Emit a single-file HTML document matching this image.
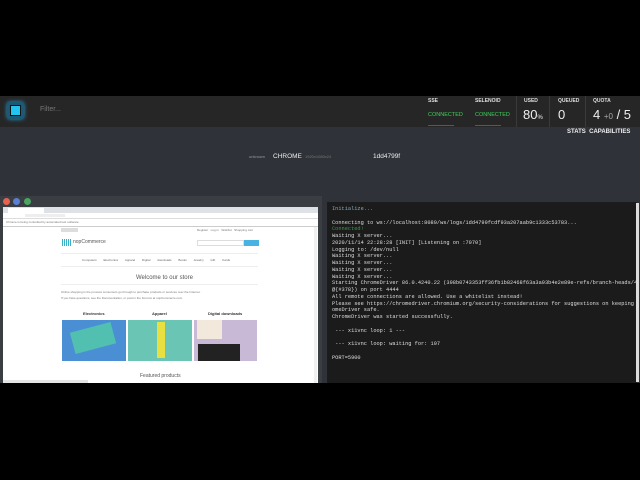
<!DOCTYPE html>
<html><head><meta charset="utf-8"><style>
*{margin:0;padding:0;box-sizing:border-box}
body{width:640px;height:480px;background:#000;font-family:"Liberation Sans",sans-serif;position:relative;overflow:hidden}
.abs{position:absolute}
.top{left:0;top:96px;width:640px;height:31px;background:#262626}
.mid{left:0;top:127px;width:640px;height:69px;background:#2f3238}
.lbl{font-size:5px;color:#ddd;font-weight:bold}
.grn{font-size:5.5px;color:#3fcf5a}
.big{font-size:13px;color:#eee}
.term{left:322px;top:196px;width:318px;height:187px;background:#2f3238}
.tin{left:327px;top:202px;width:310px;height:181px;background:#1b1b1b;font-family:"Liberation Mono",monospace;font-size:5.3px;line-height:6.75px;color:#ddd;padding:4px 0 0 5px;white-space:pre;overflow:hidden}
.win{left:0;top:196px;width:322px;height:187px;background:#3a3d42}
.dot{width:7px;height:7px;border-radius:50%;top:198px}
.br{left:3px;top:207px;width:315px;height:176px;background:#fff}
.t{font-size:3px;color:#777}
</style></head><body>
<div class="abs top"></div>
<div class="abs" style="left:7px;top:102px;width:17px;height:17px;border-radius:3px;background:#1a5a77;box-shadow:0 0 4px #29a0d0"></div>
<div class="abs" style="left:10px;top:105px;width:11px;height:11px;background:#22c5f0;border:1px solid #111"></div>
<div class="abs" style="left:40px;top:106px;font-size:7px;color:#777">Filter...</div>
<div class="abs lbl" style="left:428px;top:98px">SSE</div>
<div class="abs lbl" style="left:475px;top:98px">SELENOID</div>
<div class="abs lbl" style="left:524px;top:98px">USED</div>
<div class="abs lbl" style="left:558px;top:98px">QUEUED</div>
<div class="abs lbl" style="left:593px;top:98px">QUOTA</div>
<div class="abs grn" style="left:428px;top:112px">CONNECTED</div>
<div class="abs grn" style="left:475px;top:112px">CONNECTED</div>
<div class="abs" style="left:428px;top:125px;width:26px;height:1px;background:#3a6a48"></div>
<div class="abs" style="left:475px;top:125px;width:26px;height:1px;background:#3a6a48"></div>
<div class="abs" style="left:516px;top:96px;width:1px;height:31px;background:#3a3a3a"></div>
<div class="abs" style="left:549px;top:96px;width:1px;height:31px;background:#3a3a3a"></div>
<div class="abs" style="left:585px;top:96px;width:1px;height:31px;background:#3a3a3a"></div>
<div class="abs big" style="left:523px;top:107px">80<span style="font-size:6px">%</span></div>
<div class="abs big" style="left:558px;top:107px">0</div>
<div class="abs big" style="left:593px;top:107px">4 <span style="font-size:8px;color:#aaa">+0</span> / 5</div>
<div class="abs mid"></div>
<div class="abs" style="left:567px;top:129px;font-size:6px;color:#eee;font-weight:bold">STATS&nbsp; CAPABILITIES</div>
<div class="abs" style="left:249px;top:154px;font-size:4px;color:#999">unknown</div>
<div class="abs" style="left:273px;top:153px;font-size:6.5px;color:#eee">CHROME</div>
<div class="abs" style="left:305px;top:154px;font-size:4px;color:#777">1920x1080x24</div>
<div class="abs" style="left:373px;top:153px;font-size:6.5px;color:#eee">1dd4799f</div>
<div class="abs term"></div>
<div class="abs tin"><span style="color:#8ab">Initialize...</span>

Connecting to ws://localhost:8080/ws/logs/1dd4799fcdf93a207aab9c1333c53783...
<span style="color:#3a9a4a">Connected!</span>
Waiting X server...
2020/11/14 22:28:28 [INIT] [Listening on :7070]
Logging to: /dev/null
Waiting X server...
Waiting X server...
Waiting X server...
Waiting X server...
Starting ChromeDriver 86.0.4240.22 (398b0743353ff36fb1b82468f63a3a93b4e2e89e-refs/branch-heads/4240
@{#378}) on port 4444
All remote connections are allowed. Use a whitelist instead!
Please see https://chromedriver.chromium.org/security-considerations for suggestions on keeping Chr
omeDriver safe.
ChromeDriver was started successfully.

 --- x11vnc loop: 1 ---

 --- x11vnc loop: waiting for: 107

PORT=5900</div>
<div class="abs" style="left:636px;top:203px;width:3px;height:179px;background:#ddd"></div>
<div class="abs win"></div>
<div class="abs dot" style="left:3px;background:#e8614f"></div>
<div class="abs dot" style="left:13px;background:#5b7ed6"></div>
<div class="abs dot" style="left:24px;background:#4aa562"></div>
<div class="abs br"></div>
<div class="abs" style="left:3px;top:207px;width:315px;height:6px;background:#dee1e6"></div>
<div class="abs" style="left:8px;top:208px;width:36px;height:5px;background:#fff"></div>
<div class="abs" style="left:3px;top:218px;width:315px;height:1px;background:#ddd"></div>
<div class="abs" style="left:3px;top:226px;width:315px;height:1px;background:#ccc"></div>
<div class="abs" style="left:25px;top:214px;width:40px;height:3px;background:#eee"></div>
<div class="abs t" style="left:6px;top:220px">Chrome is being controlled by automated test software.</div>
<div class="abs" style="left:61px;top:228px;width:17px;height:4px;background:#ddd"></div>
<div class="abs t" style="left:197px;top:228px">Register &nbsp; Log in &nbsp; Wishlist &nbsp; Shopping cart</div>
<div class="abs" style="left:62px;top:239px;width:10px;height:7px;background:repeating-linear-gradient(90deg,#3ab0c8 0 1px,transparent 1px 2px)"></div>
<div class="abs" style="left:73px;top:239px;font-size:5px;color:#555">nopCommerce</div>
<div class="abs" style="left:197px;top:240px;width:47px;height:6px;border:1px solid #ddd"></div>
<div class="abs" style="left:244px;top:240px;width:15px;height:6px;background:#4ab2e3"></div>
<div class="abs" style="left:61px;top:253px;width:197px;height:1px;background:#eee"></div>
<div class="abs" style="left:82px;top:258px;font-size:3px;color:#666;word-spacing:6px">Computers Electronics Apparel Digital&nbsp;downloads Books Jewelry Gift&nbsp;Cards</div>
<div class="abs" style="left:61px;top:266px;width:197px;height:1px;background:#eee"></div>
<div class="abs" style="left:136px;top:275px;font-size:6px;color:#555">Welcome to our store</div>
<div class="abs" style="left:61px;top:284px;width:197px;height:1px;background:#eee"></div>
<div class="abs t" style="left:61px;top:290px">Online shopping is the process consumers go through to purchase products or services over the Internet.</div>
<div class="abs t" style="left:61px;top:296px">If you have questions, see the Documentation, or post in the Forums at nopCommerce.com</div>
<div class="abs" style="left:83px;top:311px;font-size:4px;font-weight:bold;color:#333">Electronics</div>
<div class="abs" style="left:152px;top:311px;font-size:4px;font-weight:bold;color:#333">Apparel</div>
<div class="abs" style="left:208px;top:311px;font-size:4px;font-weight:bold;color:#333">Digital downloads</div>
<div class="abs" style="left:62px;top:320px;width:64px;height:41px;background:#4a8fd4"></div>
<div class="abs" style="left:72px;top:327px;width:42px;height:22px;background:#52c0b0;transform:rotate(-15deg)"></div>
<div class="abs" style="left:128px;top:320px;width:64px;height:41px;background:#6ac5b5"></div>
<div class="abs" style="left:157px;top:322px;width:8px;height:36px;background:#e8e040"></div>
<div class="abs" style="left:194px;top:320px;width:63px;height:41px;background:#c8b9d6"></div>
<div class="abs" style="left:197px;top:320px;width:25px;height:19px;background:#f2e8dc"></div>
<div class="abs" style="left:198px;top:344px;width:42px;height:17px;background:#222"></div>
<div class="abs" style="left:140px;top:373px;font-size:5px;color:#555">Featured products</div>
<div class="abs" style="left:3px;top:380px;width:85px;height:3px;background:#e4e4e4"></div>
<div class="abs" style="left:314px;top:227px;width:3px;height:156px;background:#f0f0f0"></div>
</body></html>
